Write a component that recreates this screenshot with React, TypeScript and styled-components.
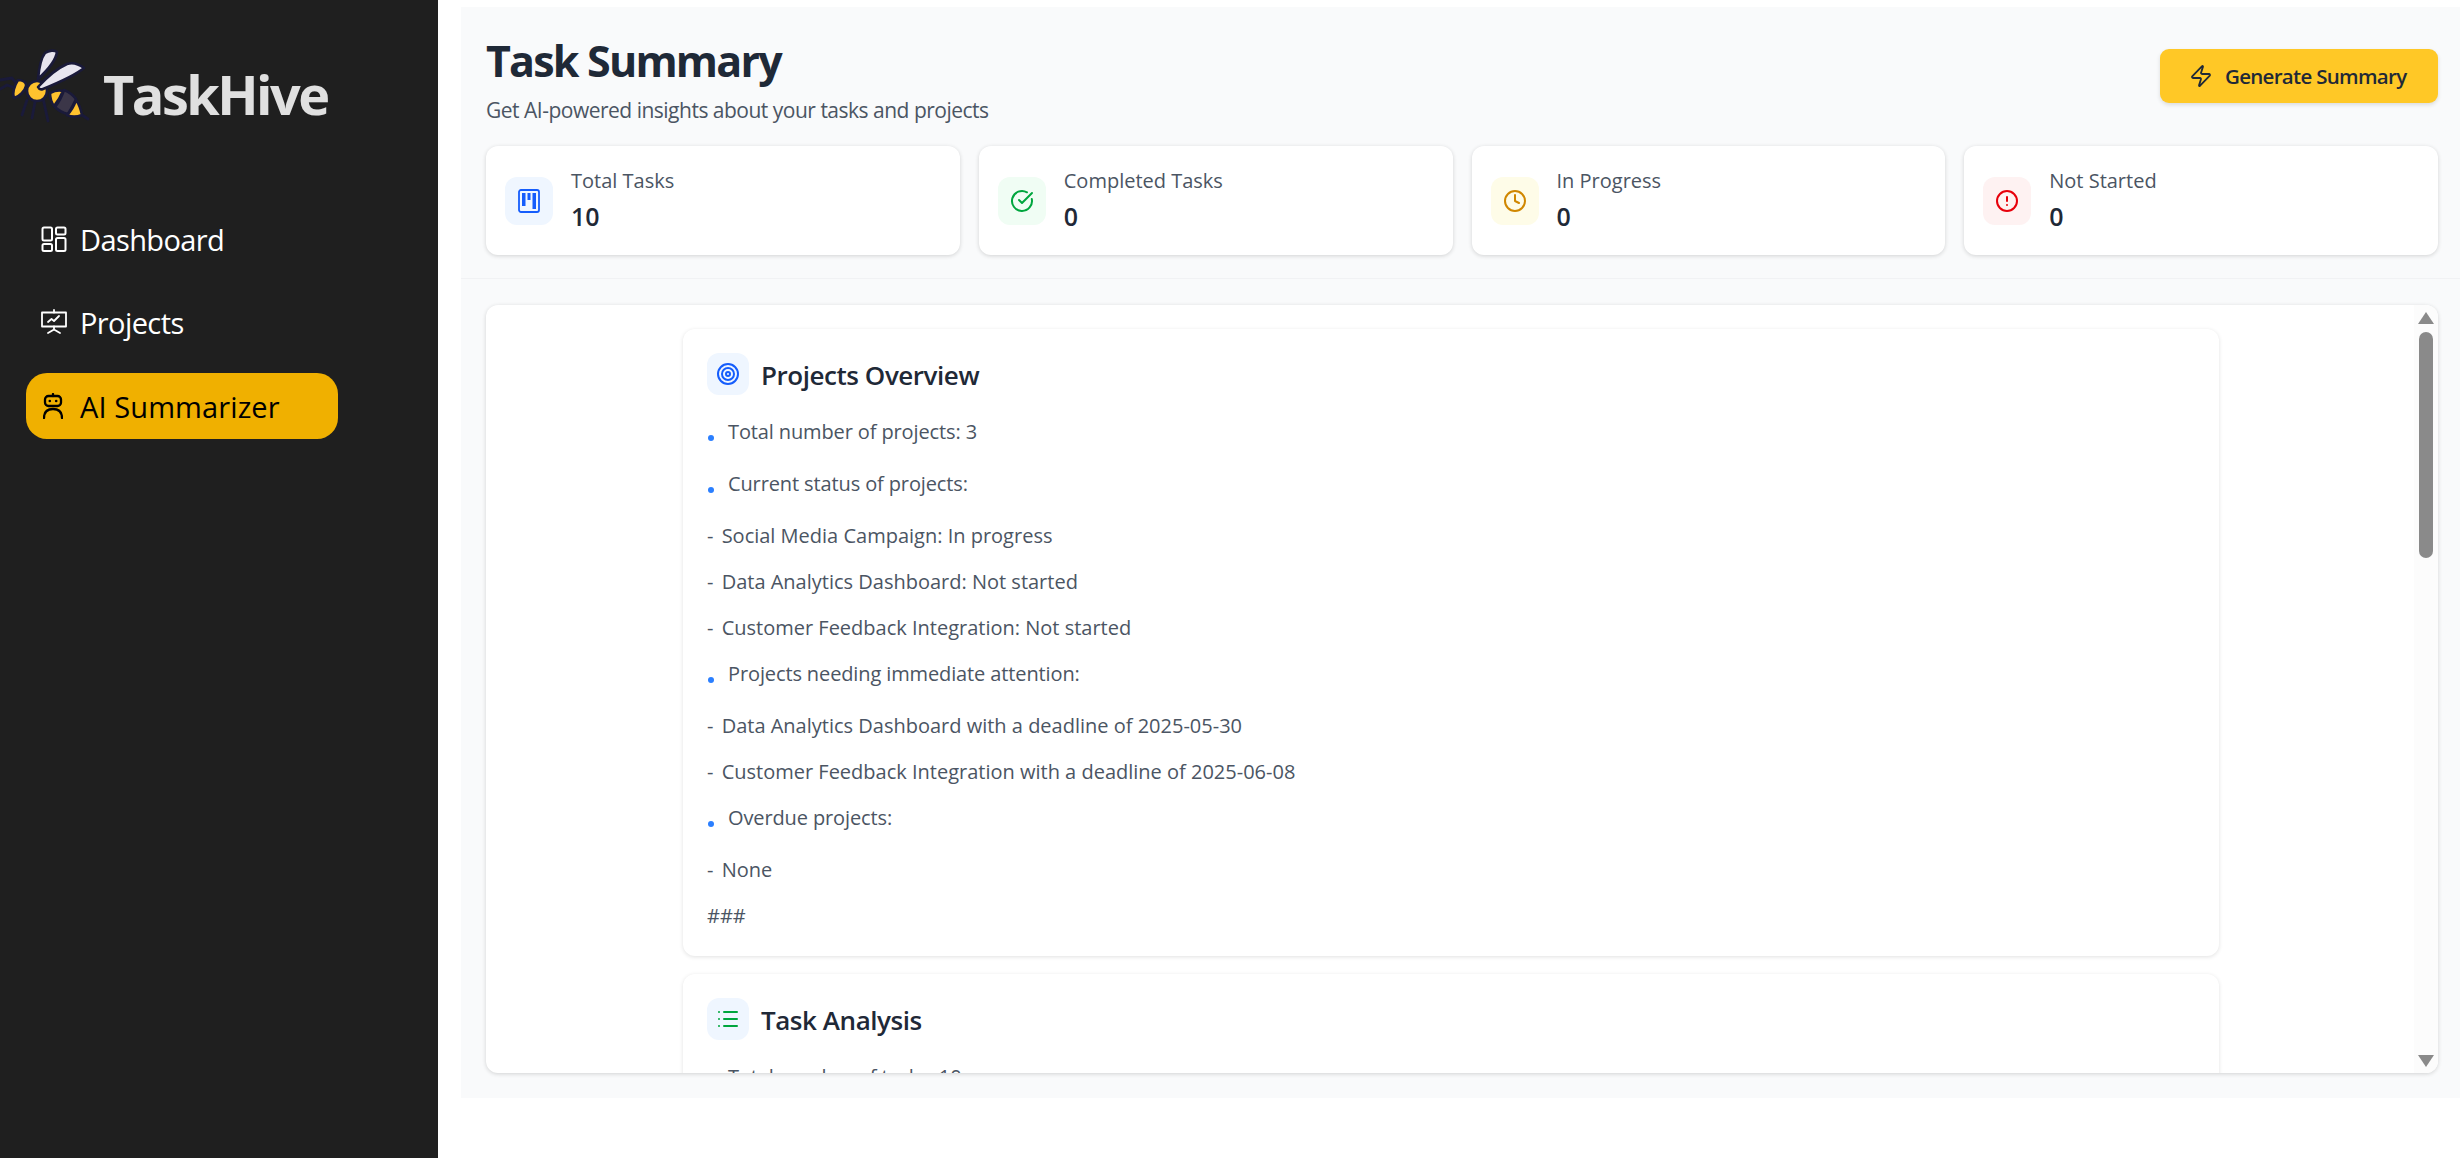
import React from 'react'
import styled, { createGlobalStyle } from 'styled-components'
import { Zap, CircleAlert, Clock, List, Target } from 'lucide-react'

const GlobalStyle = createGlobalStyle`
  html, body { margin: 0; padding: 0; height: 100%; background: #fff; }
  body { font-family: "Open Sans", "Noto Sans", sans-serif; overflow: hidden; }
  #root { height: 100%; }
`

const Page = styled.div`
  display: flex;
  height: 1158px;
`

const Sidebar = styled.aside`
  width: 438px;
  flex: none;
  background: #1f1f1f;
  padding: 30px 0 0 0;
  box-sizing: border-box;
`

const Brand = styled.div`
  display: flex;
  align-items: flex-start;
  height: 100px;
  margin-bottom: 76px;
`

const BrandName = styled.span`
  color: #e0e0e0;
  font-size: 54px;
  line-height: 72px;
  font-weight: 700;
  margin: 28px 0 0 13px;
  letter-spacing: -2.5px;
`

const Nav = styled.nav`
  display: flex;
  flex-direction: column;
  gap: 17px;
  padding-left: 26px;
`

const NavItem = styled.a<{ $active?: boolean }>`
  display: flex;
  align-items: center;
  gap: ${p => (p.$active ? 17 : 13)}px;
  width: 312px;
  height: 66px;
  margin-top: ${p => (p.$active ? 1 : 0)}px;
  padding-left: ${p => (p.$active ? 17 : 15)}px;
  box-sizing: border-box;
  border-radius: 21px;
  font-size: 29px;
  letter-spacing: ${p => (p.$active ? '0.1px' : '-0.6px')};
  font-weight: ${p => (p.$active ? 500 : 400)};
  color: ${p => (p.$active ? '#000' : '#fff')};
  background: ${p => (p.$active ? '#f0b000' : 'transparent')};
`

const Main = styled.main`
  flex: 1;
  margin: 7px 0 60px 23px;
  background: #f9fafb;
  display: flex;
  flex-direction: column;
  min-width: 0;
`

const Header = styled.header`
  padding: 26px 22px 24px 25px;
  border-bottom: 1px solid #f1f2f4;
  height: 272px;
  box-sizing: border-box;
  flex: none;
`

const TitleRow = styled.div`
  display: flex;
  justify-content: space-between;
  align-items: flex-start;
  height: 113px;
`

const Title = styled.h1`
  margin: 0 0 6px;
  color: #1f2937;
  font-size: 43px;
  line-height: 56px;
  font-weight: 700;
  letter-spacing: -1.8px;
`

const Subtitle = styled.p`
  margin: 0;
  color: #4b5563;
  font-size: 21px;
  line-height: 30px;
  letter-spacing: -0.5px;
`

const GenerateButton = styled.button`
  display: flex;
  align-items: center;
  gap: 12px;
  margin-top: 16px;
  width: 278px;
  height: 54px;
  padding: 0 0 0 29px;
  box-sizing: border-box;
  border: none;
  border-radius: 9px;
  background: #ffc826;
  color: #1f2937;
  font-family: inherit;
  font-size: 20.5px;
  font-weight: 600;
  letter-spacing: -0.7px;
  box-shadow: 0 2px 4px rgba(0, 0, 0, 0.12);
`

const StatGrid = styled.div`
  display: grid;
  grid-template-columns: repeat(4, 1fr);
  gap: 19px;
`

const StatCard = styled.div`
  display: flex;
  align-items: center;
  gap: 18px;
  height: 109px;
  padding-left: 19px;
  box-sizing: border-box;
  background: #fff;
  border-radius: 12px;
  box-shadow: 0 1px 4px rgba(0, 0, 0, 0.16);
`

const IconBox = styled.div<{ $bg: string; $color: string; $size?: number }>`
  width: ${p => p.$size ?? 48}px;
  height: ${p => p.$size ?? 48}px;
  flex: none;
  border-radius: 12px;
  display: flex;
  align-items: center;
  justify-content: center;
  background: ${p => p.$bg};
  color: ${p => p.$color};
`

const StatText = styled.div`
  display: flex;
  flex-direction: column;
  gap: 2px;
  margin-top: -2px;
`

const StatLabel = styled.span`
  color: #4b5563;
  font-size: 20px;
  line-height: 30px;
  font-weight: 500;
  letter-spacing: 0;
`

const StatValue = styled.span`
  color: #1f2937;
  font-size: 25px;
  line-height: 36px;
  font-weight: 600;
`

const ScrollWrap = styled.div`
  padding: 26px 22px 25px 25px;
  flex: 1;
  min-height: 0;
  display: flex;
`

const ScrollPanel = styled.div`
  position: relative;
  flex: 1;
  background: #fff;
  border-radius: 12px;
  box-shadow: 0 1px 4px rgba(0, 0, 0, 0.16);
  overflow: hidden;
  padding: 24px 219px 0 197px;
`

const ScrollTrack = styled.div`
  position: absolute;
  top: 0;
  right: 0;
  bottom: 0;
  width: 24px;
  background: #fcfcfc;
`

const ScrollThumb = styled.div`
  position: absolute;
  top: 27px;
  left: 5px;
  width: 14px;
  height: 226px;
  border-radius: 7px;
  background: #8a8a8a;
`

const ScrollArrow = styled.svg<{ $down?: boolean }>`
  position: absolute;
  left: 4px;
  width: 16px;
  height: 12px;
  ${p => (p.$down ? 'bottom: 6px;' : 'top: 7px;')}
`

const Section = styled.section`
  background: #fff;
  border-radius: 12px;
  box-shadow: 0 1px 4px rgba(0, 0, 0, 0.12);
  padding: 24px;
  margin-bottom: 18px;
`

const SectionHead = styled.div`
  display: flex;
  align-items: center;
  gap: 12px;
  margin-bottom: 21px;
`

const SectionTitle = styled.h2`
  margin: 0;
  padding-top: 2px;
  color: #1f2937;
  font-size: 26px;
  line-height: 40px;
  font-weight: 600;
  letter-spacing: -0.45px;
`

const Bullet = styled.div`
  position: relative;
  padding-left: 21px;
  margin-bottom: 20px;
  color: #4b5563;
  font-size: 20px;
  line-height: 32px;
  letter-spacing: -0.12px;

  &::before {
    content: '';
    position: absolute;
    left: 1px;
    top: 19px;
    width: 6px;
    height: 6px;
    border-radius: 50%;
    background: #2b7fff;
  }
`

const Line = styled.p<{ $last?: boolean }>`
  margin: 0 0 ${p => (p.$last ? 0 : 14)}px;
  color: #4b5563;
  font-size: 20px;
  line-height: 32px;
`

const Dash = styled.span`
  margin-right: 3px;
`

const Bee = () => (
  <svg width="90" height="100" viewBox="0 0 90 100" style={{ flex: 'none' }}>
    <g stroke="#1a1a3a" strokeWidth="2.8" fill="none" strokeLinecap="round" strokeLinejoin="round">
      <path d="M0 50 L12 48 L16 53" />
      <path d="M0 59 L7 55 L15 58" />
      <path d="M27 70 L22 85" />
      <path d="M35 72 L32 88" />
      <path d="M43 68 L48 91" />
      <path d="M82 85 L88 89" />
    </g>
    <g stroke="#1a1a3a" strokeWidth="2.6" strokeLinejoin="round">
      <path d="M18 50 C22 50 27 52 26 56 C25 61 19 67 14 68 C12 64 14 56 18 50 Z" fill="#ffc22e" />
      <path d="M38 49 C39 38 41 28 45 23 C49 20 55 20 57 22 C56 30 50 38 38 49 Z" fill="#e6e3ee" />
      <circle cx="37" cy="61" r="10" fill="#ffc22e" />
      <path d="M50 63 C54 61 59 60 63 61 C61 66 58 71 54 76 C51 72 50 68 50 63 Z" fill="#ffc22e" />
      <path d="M64 60 C69 62 73 65 76 69 C74 74 71 79 68 84 C63 83 58 80 55 77 C59 72 62 66 64 60 Z" fill="#3b3648" />
      <path d="M76 70 C79 74 81 80 82 85 C77 87 71 87 67 85 C71 81 74 76 76 70 Z" fill="#ffc22e" />
      <path d="M38 57 C47 47 58 38 67 34 C73 32 80 35 84 38 C78 43 60 52 43 59 C41 60 39 59 38 57 Z" fill="#e8e6f0" />
    </g>
  </svg>
)

const DashboardIcon = () => (
  <svg width="26" height="26" viewBox="0 0 26 26" fill="none" stroke="#fff" strokeWidth="2" strokeLinejoin="round">
    <rect x="1.5" y="1.5" width="9.5" height="13" rx="1.5" />
    <rect x="15" y="1.5" width="9.5" height="7" rx="1.5" />
    <rect x="15" y="12" width="9.5" height="13" rx="1.5" />
    <rect x="1.5" y="18" width="9.5" height="7" rx="1.5" />
  </svg>
)

const PresentationIcon = () => (
  <svg width="26" height="26" viewBox="0 0 26 26" fill="none" stroke="#fff" strokeWidth="1.8" strokeLinecap="round" strokeLinejoin="round">
    <path d="M1 3.5h24v14H1z" />
    <path d="M13 1v2.5M13 17.5v3M7 24l6-3.5 6 3.5" />
    <path d="M7 13l3.5-3 2.5 2 5-5" />
  </svg>
)

const RobotIcon = () => (
  <svg width="20" height="26" viewBox="0 0 20 26" fill="none" stroke="#000" strokeWidth="2.3" strokeLinecap="round" strokeLinejoin="round">
    <rect x="2" y="3" width="16" height="10" rx="3.5" />
    <path d="M10 1v2" />
    <circle cx="6.8" cy="8" r="1.3" fill="#000" stroke="none" />
    <circle cx="13.2" cy="8" r="1.3" fill="#000" stroke="none" />
    <path d="M1 25c0-6 3.5-9 9-9s9 3 9 9" />
  </svg>
)

const KanbanIcon = () => (
  <svg width="22" height="24" viewBox="0 0 22 24" fill="none" stroke="currentColor">
    <rect x="1" y="1" width="20" height="22" rx="2" strokeWidth="1.8" />
    <rect x="4" y="4" width="3.5" height="13" fill="currentColor" stroke="none" />
    <rect x="9.5" y="4" width="3" height="7" fill="currentColor" stroke="none" />
    <rect x="14.5" y="4" width="3.5" height="16" fill="currentColor" stroke="none" />
  </svg>
)

const CheckCircle = () => (
  <svg width="24" height="24" viewBox="0 0 24 24" fill="none" stroke="currentColor" strokeWidth="2" strokeLinecap="round" strokeLinejoin="round">
    <path d="M21.8 10A10 10 0 1 1 17 3.3" />
    <path d="m9 11 3 3L22 4" />
  </svg>
)

const stats = [
  { label: 'Total Tasks', value: 10, bg: '#eff6ff', color: '#155dfc', icon: <KanbanIcon /> },
  { label: 'Completed Tasks', value: 0, bg: '#f0fdf4', color: '#00a63e', icon: <CheckCircle /> },
  { label: 'In Progress', value: 0, bg: '#fefce8', color: '#d08700', icon: <Clock size={24} /> },
  { label: 'Not Started', value: 0, bg: '#fef2f2', color: '#e7000b', icon: <CircleAlert size={24} /> },
]

const App = () => (
  <>
    <GlobalStyle />
    <Page>
      <Sidebar>
        <Brand>
          <Bee />
          <BrandName>TaskHive</BrandName>
        </Brand>
        <Nav>
          <NavItem><DashboardIcon />Dashboard</NavItem>
          <NavItem><PresentationIcon />Projects</NavItem>
          <NavItem $active><RobotIcon />AI Summarizer</NavItem>
        </Nav>
      </Sidebar>
      <Main>
        <Header>
          <TitleRow>
            <div>
              <Title>Task Summary</Title>
              <Subtitle>Get AI-powered insights about your tasks and projects</Subtitle>
            </div>
            <GenerateButton><Zap size={24} strokeWidth={1.8} />Generate Summary</GenerateButton>
          </TitleRow>
          <StatGrid>
            {stats.map(s => (
              <StatCard key={s.label}>
                <IconBox $bg={s.bg} $color={s.color}>{s.icon}</IconBox>
                <StatText>
                  <StatLabel>{s.label}</StatLabel>
                  <StatValue>{s.value}</StatValue>
                </StatText>
              </StatCard>
            ))}
          </StatGrid>
        </Header>
        <ScrollWrap>
          <ScrollPanel>
            <Section>
              <SectionHead>
                <IconBox $bg="#eff6ff" $color="#155dfc" $size={42}><Target size={24} strokeWidth={2} /></IconBox>
                <SectionTitle>Projects Overview</SectionTitle>
              </SectionHead>
              <Bullet>Total number of projects: 3</Bullet>
              <Bullet>Current status of projects:</Bullet>
              <Line><Dash>-</Dash> Social Media Campaign: In progress</Line>
              <Line><Dash>-</Dash> Data Analytics Dashboard: Not started</Line>
              <Line><Dash>-</Dash> Customer Feedback Integration: Not started</Line>
              <Bullet>Projects needing immediate attention:</Bullet>
              <Line><Dash>-</Dash> Data Analytics Dashboard with a deadline of 2025-05-30</Line>
              <Line><Dash>-</Dash> Customer Feedback Integration with a deadline of 2025-06-08</Line>
              <Bullet>Overdue projects:</Bullet>
              <Line><Dash>-</Dash> None</Line>
              <Line $last>###</Line>
            </Section>
            <Section>
              <SectionHead>
                <IconBox $bg="#eff6ff" $color="#00a63e" $size={42}><List size={24} strokeWidth={2} /></IconBox>
                <SectionTitle>Task Analysis</SectionTitle>
              </SectionHead>
              <Bullet>Total number of tasks: 10</Bullet>
            </Section>
            <ScrollTrack>
              <ScrollArrow viewBox="0 0 16 12"><path d="M8 0 L16 12 H0 Z" fill="#8a8a8a" /></ScrollArrow>
              <ScrollThumb />
              <ScrollArrow $down viewBox="0 0 16 12"><path d="M0 0 H16 L8 12 Z" fill="#8a8a8a" /></ScrollArrow>
            </ScrollTrack>
          </ScrollPanel>
        </ScrollWrap>
      </Main>
    </Page>
  </>
)

export default App
